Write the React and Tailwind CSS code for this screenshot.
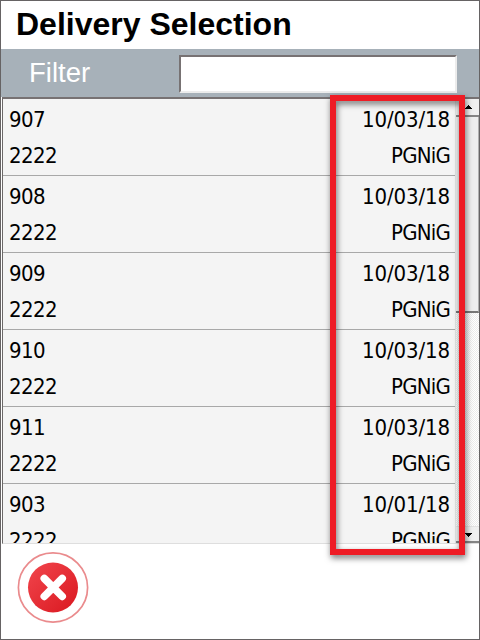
const deliveries = [
  { id: '907', code: '2222', date: '10/03/18', client: 'PGNiG' },
  { id: '908', code: '2222', date: '10/03/18', client: 'PGNiG' },
  { id: '909', code: '2222', date: '10/03/18', client: 'PGNiG' },
  { id: '910', code: '2222', date: '10/03/18', client: 'PGNiG' },
  { id: '911', code: '2222', date: '10/03/18', client: 'PGNiG' },
  { id: '903', code: '2222', date: '10/01/18', client: 'PGNiG' },
];

function Row({ item }) {
  return (
    <li className="h-[77px] shrink-0 border-b border-[#a8a8a8] pl-[6px] pr-[5px] pt-[3px] leading-9">
      <div className="flex justify-between">
        <span>{item.id}</span>
        <span className="tracking-[-0.1px]">{item.date}</span>
      </div>
      <div className="flex justify-between">
        <span>{item.code}</span>
        <span className="tracking-[-0.8px]">{item.client}</span>
      </div>
    </li>
  );
}

function ScrollBar() {
  return (
    <div className="flex w-6 shrink-0 flex-col border-l border-[#e3e3e3] bg-[repeating-conic-gradient(#ececec_0_25%,#ffffff_0_50%)] bg-[length:2px_2px]">
      <div className="flex h-[18px] shrink-0 items-center border-b-2 border-[#858585] bg-[#f0f0f0] pl-[9px] pb-[1px]">
        <svg width="7" height="4" viewBox="0 0 7 4" shapeRendering="crispEdges">
          <path d="M3 0h1v1h1v1h1v1h1v1H0V3h1V2h1V1h1z" fill="#000" />
        </svg>
      </div>
      <div className="h-[196px] shrink-0 border-b-2 border-r border-b-[#777] border-r-[#b0b0b0] bg-[#eeeeee]" />
      <div className="mt-auto flex h-[17px] shrink-0 items-center border-b-2 border-t border-b-[#858585] border-t-[#e3e3e3] bg-[#f0f0f0] pl-[9px] pt-[2px]">
        <svg width="7" height="4" viewBox="0 0 7 4" shapeRendering="crispEdges">
          <path d="M0 0h7v1H6v1H5v1H4v1H3V3H2V2H1V1H0z" fill="#000" />
        </svg>
      </div>
    </div>
  );
}

export default function App() {
  return (
    <div className="relative flex h-[640px] w-[480px] flex-col overflow-hidden border border-[#666364] bg-white font-['Liberation_Sans',Arial,sans-serif]">
      <h1 className="h-12 shrink-0 pl-[15px] pt-[1px] text-[32px] font-bold leading-[44px] text-black">
        Delivery Selection
      </h1>
      <div className="flex h-12 shrink-0 items-start bg-[#a7b1b9] pt-[6px]">
        <label htmlFor="filter" className="w-[178px] pl-[28px] text-[27.5px] leading-[35px] text-white">
          Filter
        </label>
        <input
          id="filter"
          className="h-[38px] w-[278px] border-2 border-b-[#ececec] border-l-[#777273] border-r-[#ececec] border-t-[#777273] bg-white px-2 text-[22px] outline-none"
        />
      </div>
      <div className="ml-px flex h-[447px] shrink-0 overflow-hidden border-b border-l border-t-2 border-b-[#dedede] border-l-[#6b6868] border-t-[#777273] bg-[#f4f4f4]">
        <ul className="flex min-w-0 flex-1 flex-col overflow-hidden font-['DejaVu_Sans_Condensed','DejaVu_Sans',sans-serif] text-[22px] tracking-[-0.6px] text-black [font-stretch:condensed]">
          {deliveries.map((item) => (
            <Row key={item.id} item={item} />
          ))}
        </ul>
        <ScrollBar />
      </div>
      <div className="flex flex-1 items-start pl-[16px] pt-[8px]">
        <button aria-label="Cancel">
          <svg width="72" height="72" viewBox="0 0 72 72">
            <defs>
              <linearGradient id="cancelFill" x1="0" y1="0" x2="1" y2="1">
                <stop offset="0.15" stopColor="#ee3f46" />
                <stop offset="0.9" stopColor="#dc1c24" />
              </linearGradient>
            </defs>
            <circle cx="36" cy="35.5" r="34.6" fill="#fff" stroke="#ea8b8d" strokeWidth="1.7" />
            <circle cx="36" cy="35.5" r="25" fill="url(#cancelFill)" />
            <path d="M27.3 26.5L45.2 44.4M45.2 26.5L27.3 44.4" stroke="#fff" strokeWidth="7.6" strokeLinecap="round" />
          </svg>
        </button>
      </div>
      <div className="pointer-events-none absolute left-[329px] top-[94px] h-[460px] w-[135px] border-[6px] border-[#ee1c25] [filter:drop-shadow(1px_3px_3px_rgba(0,0,0,0.55))]" />
    </div>
  );
}
